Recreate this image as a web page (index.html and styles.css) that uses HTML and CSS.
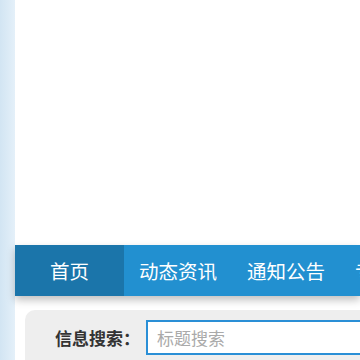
FILE: index.html
```html
<!DOCTYPE html>
<html lang="zh-CN">
<head>
    <meta charset="UTF-8">
    <meta name="viewport" content="width=device-width, initial-scale=1.0">
    <title>首页</title>
    <link rel="stylesheet" href="styles.css">
</head>
<body>
    <div class="page">
        <div class="side-strip"></div>

        <div class="main">
            <!-- Banner area -->
            <div class="banner"></div>

            <!-- Navigation -->
            <div class="nav">
                <a class="nav-item active">首页</a>
                <a class="nav-item">动态资讯</a>
                <a class="nav-item">通知公告</a>
                <a class="nav-item">专题专栏</a>
            </div>

            <!-- Search -->
            <div class="search-panel">
                <span class="search-label">信息搜索：</span>
                <input class="search-input" type="text" placeholder="标题搜索">
            </div>
        </div>
    </div>
</body>
</html>
```

FILE: styles.css
```css
:root {
    --nav-color: #2290d0;
    --nav-active: #1b75aa;
}

body {
    margin: 0;
    padding: 0;
    overflow: hidden;
    background: #fff;
    font-family: "Noto Sans CJK SC", "Noto Sans", sans-serif;
}

.page {
    display: flex;
    height: 360px;
}

.side-strip {
    width: 15px;
    flex-shrink: 0;
    background: linear-gradient(to right, #d2e5f3, #e4f0f9);
}

.main {
    flex: 1;
    min-width: 0;
}

.banner {
    height: 245px;
    background: #fff;
}

/* Navigation */
.nav {
    display: flex;
    height: 51px;
    background: var(--nav-color);
    box-shadow: 0 4px 8px rgba(0, 0, 0, 0.25);
    white-space: nowrap;
    overflow: hidden;
    position: relative;
    z-index: 1;
}

.nav-item {
    display: flex;
    align-items: center;
    justify-content: center;
    padding: 0 15px;
    color: #fff;
    font-size: 19.5px;
    flex-shrink: 0;
    cursor: pointer;
}

.nav-item.active {
    width: 109px;
    padding: 0;
    background: var(--nav-active);
}

/* Search */
.search-panel {
    display: flex;
    align-items: flex-start;
    margin: 14px 0 0 10px;
    padding: 10px 0 10px 30px;
    background: #eeeeee;
    border-top-left-radius: 10px;
    white-space: nowrap;
}

.search-label {
    width: 91px;
    flex-shrink: 0;
    line-height: 35px;
    font-size: 17px;
    font-weight: bold;
    color: #333;
}

.search-input {
    box-sizing: border-box;
    width: 400px;
    flex-shrink: 0;
    height: 35px;
    border: 2px solid #2a8fd6;
    padding: 0 9px;
    font-family: inherit;
    font-size: 17px;
    background: #fff;
    outline: none;
}

.search-input::placeholder {
    color: #aaa;
}
```
